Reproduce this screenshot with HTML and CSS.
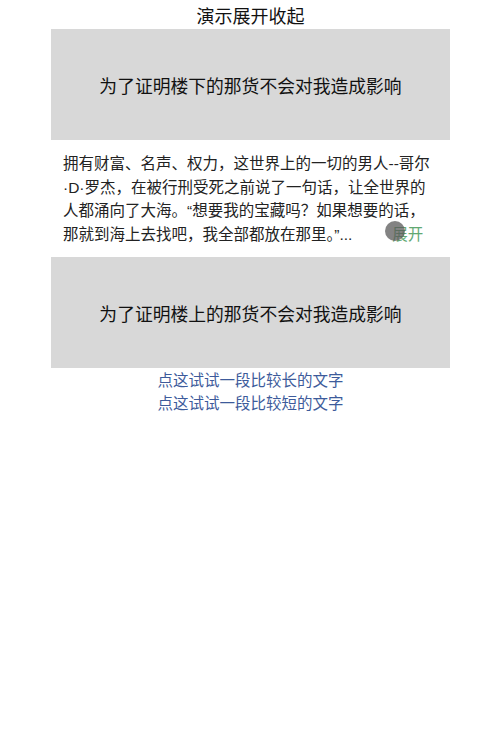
FILE: index.html
```html
<!DOCTYPE html>
<html>
<head>
    <meta charset="utf-8">
    <link rel="stylesheet" href="styles.css">
</head>
<body>
    <div class="page">
        <h1 class="title">演示展开收起</h1>

        <div class="block">为了证明楼下的那货不会对我造成影响</div>

        <div class="intro">
            <p class="intro-text">拥有财富、名声、权力，这世界上的一切的男人--哥尔·D·罗杰，在被行刑受死之前说了一句话，让全世界的人都涌向了大海。“想要我的宝藏吗？如果想要的话，那就到海上去找吧，我全部都放在那里。”...<span class="toggle" id="toggle">展开</span></p>
        </div>

        <div class="block">为了证明楼上的那货不会对我造成影响</div>

        <div class="links">
            <a class="demo-link" href="#">点这试试一段比较长的文字</a>
            <a class="demo-link" href="#">点这试试一段比较短的文字</a>
        </div>
    </div>
</body>
</html>
```

FILE: styles.css
```css
* {
    margin: 0;
    padding: 0;
    box-sizing: border-box;
}

body {
    font-family: "Liberation Sans", "Noto Sans CJK SC", sans-serif;
    background: #fff;
    color: #333;
}

.page {
    width: 400px;
    margin: 0 auto;
    padding-left: 1px;
}

.title {
    font-size: 18px;
    font-weight: normal;
    color: #111;
    text-align: center;
    line-height: 24px;
    padding-top: 5px;
}

.block {
    height: 111px;
    background: #d8d8d8;
    display: flex;
    justify-content: center;
    align-items: center;
    font-size: 17.8px;
    color: #111;
}

.intro {
    padding: 12px 12px 11px;
}

.intro-text {
    font-size: 15.5px;
    line-height: 23.5px;
    color: #222;
}

.toggle {
    position: relative;
    display: inline-block;
    margin-left: 40px;
    color: #62a972;
    cursor: pointer;
}

/* tap highlight left on the button */
.toggle::before {
    content: "";
    position: absolute;
    left: -7px;
    top: -2px;
    width: 20px;
    height: 20px;
    border-radius: 50%;
    background: rgba(90, 90, 90, 0.75);
}

.links {
    display: flex;
    flex-direction: column;
    align-items: center;
    padding-top: 1px;
}

.demo-link {
    font-size: 15.5px;
    line-height: 23px;
    color: #3d5b9b;
    text-decoration: none;
}
```
